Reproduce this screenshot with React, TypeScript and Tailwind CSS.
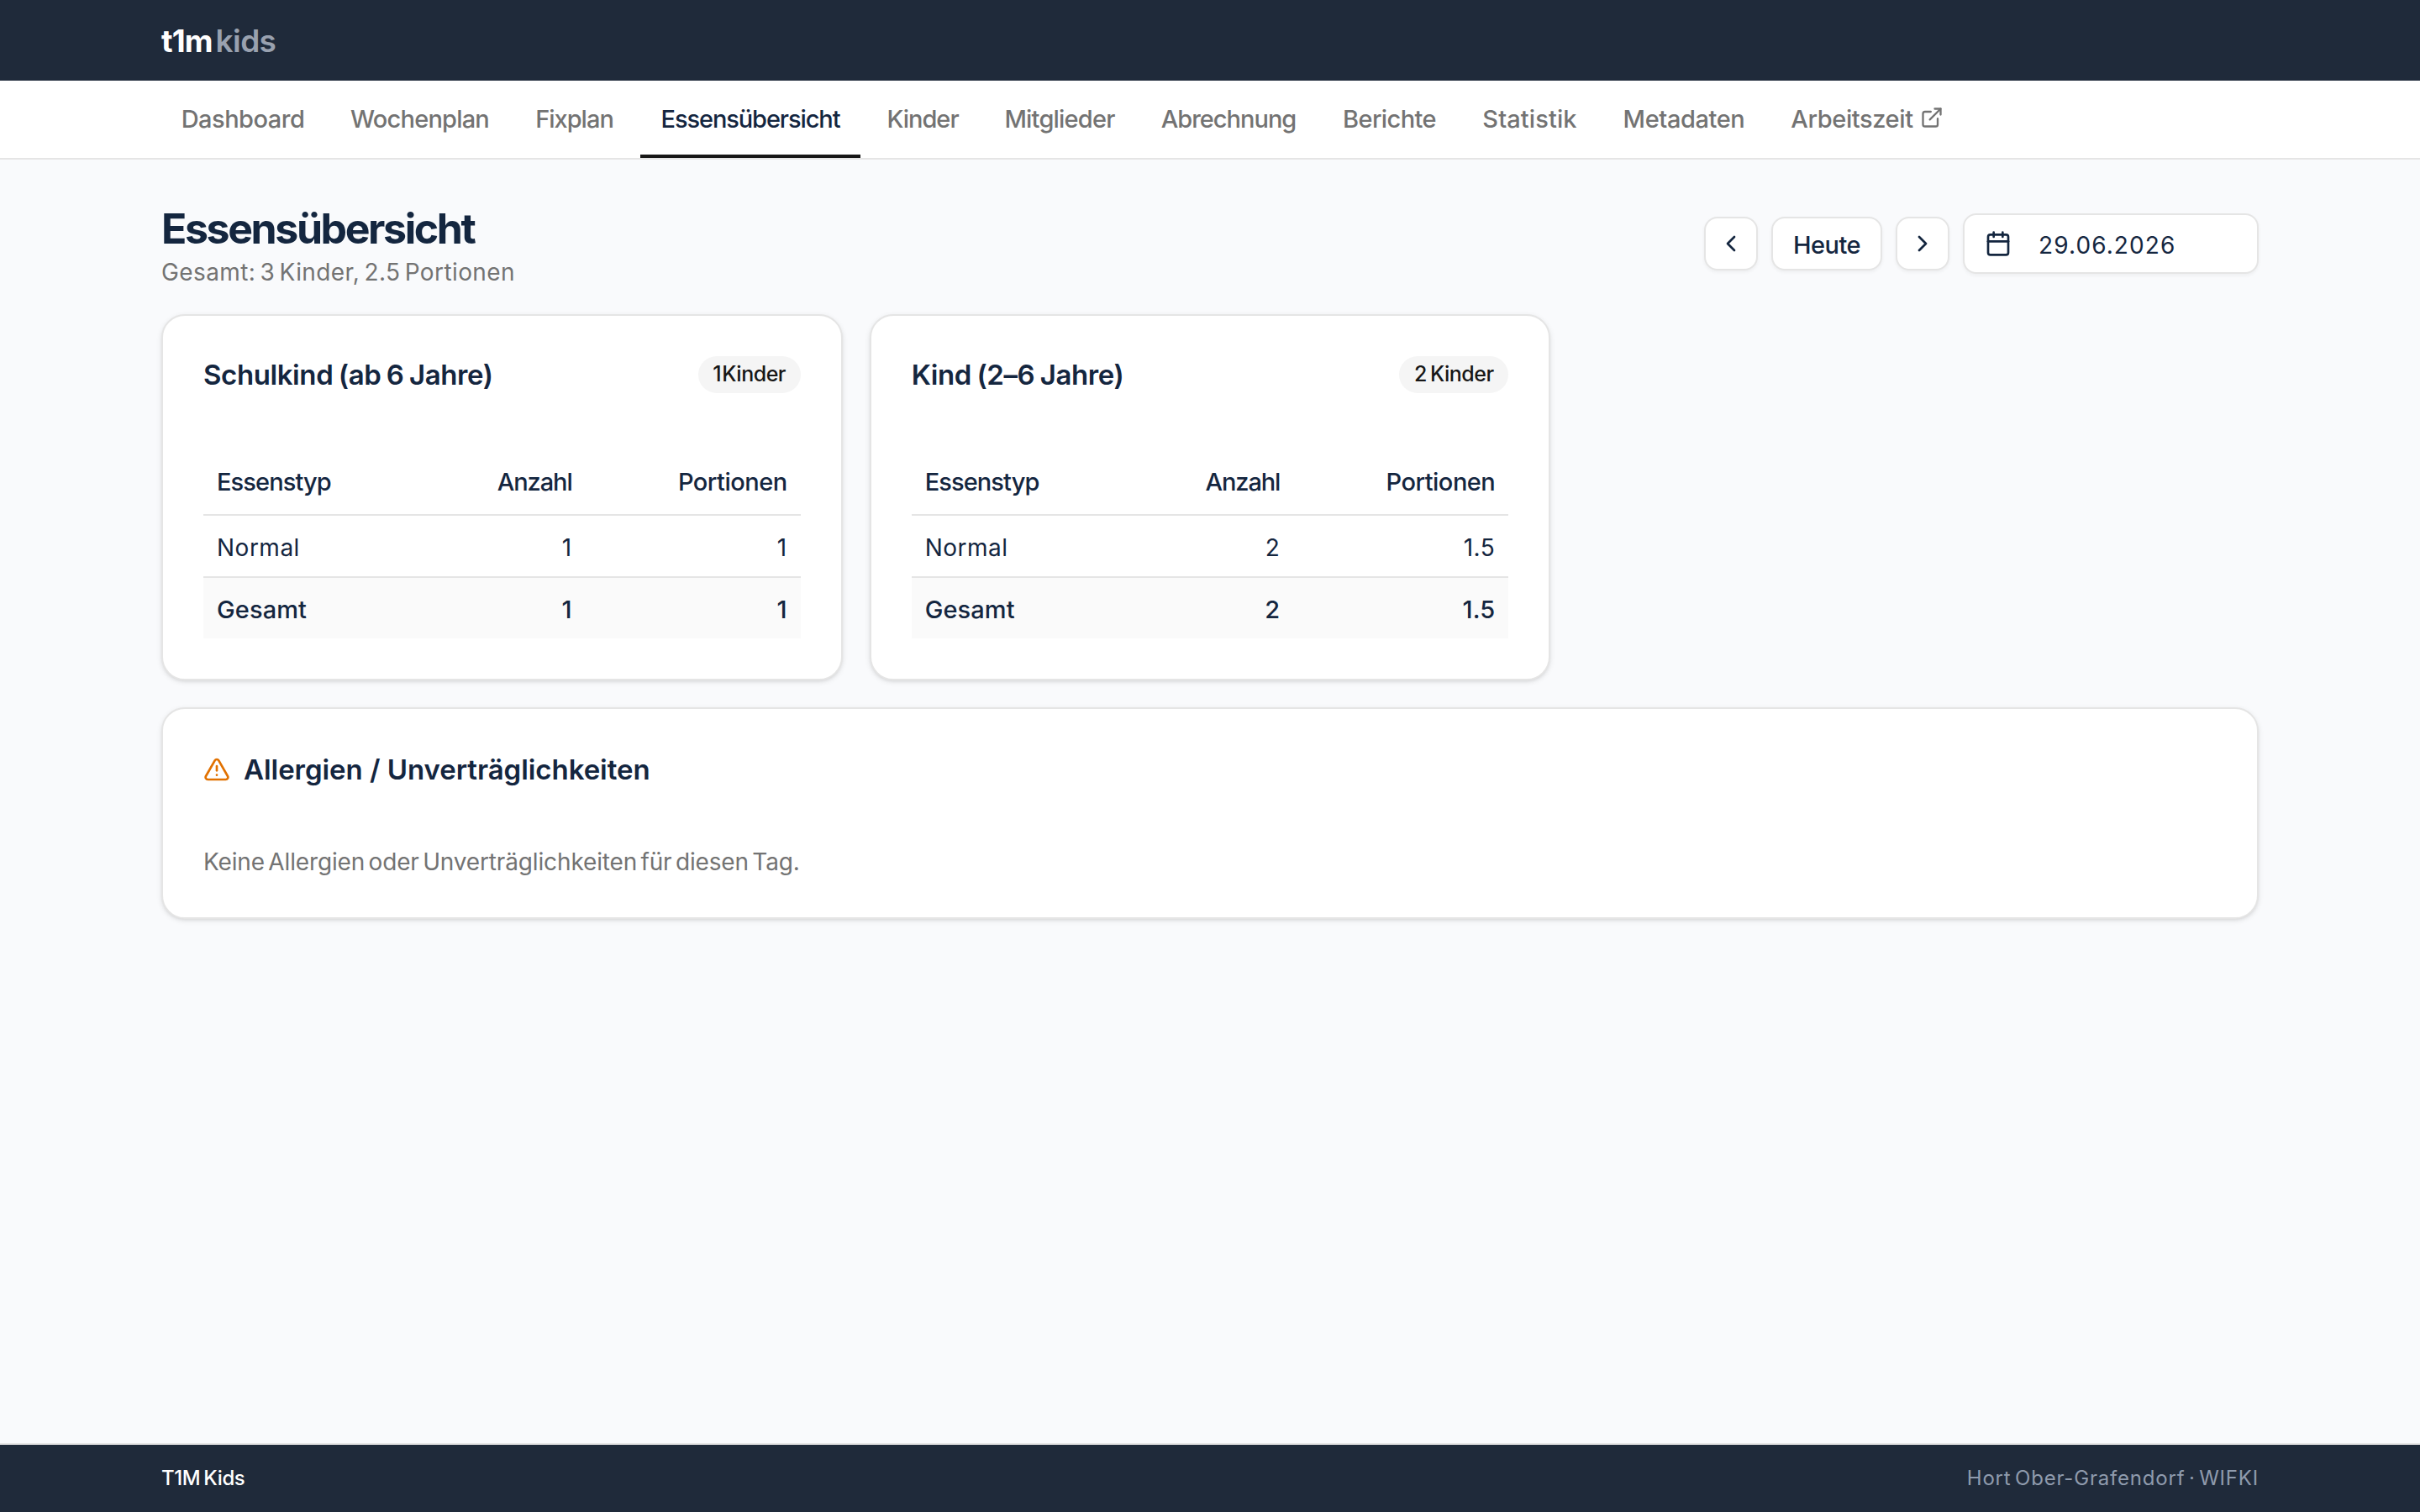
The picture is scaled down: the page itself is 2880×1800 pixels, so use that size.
import { Calendar, ChevronLeft, ChevronRight, ExternalLink, TriangleAlert } from "lucide-react";

type NavItem = { label: string; className: string; external?: boolean };

const navItems: NavItem[] = [
  { label: "Dashboard", className: "w-[194px] tracking-[-0.5px]" },
  { label: "Wochenplan", className: "w-[211px] tracking-[-0.8px]" },
  { label: "Fixplan", className: "w-[141px] tracking-[-1px]" },
  { label: "Essensübersicht", className: "w-[262px] tracking-[-1.1px]" },
  { label: "Kinder", className: "w-[132px] tracking-[-1px]" },
  { label: "Mitglieder", className: "w-[178px] tracking-[-0.8px]" },
  { label: "Abrechnung", className: "w-[208px] tracking-[-1px]" },
  { label: "Berichte", className: "w-[159px] tracking-[-0.6px]" },
  { label: "Statistik", className: "w-[159px] tracking-[0.1px]" },
  { label: "Metadaten", className: "w-[192px] tracking-[-0.4px]" },
  { label: "Arbeitszeit", className: "w-[228px] tracking-[-0.4px]", external: true },
];

type Group = {
  title: string;
  count: string;
  badgeClass: string;
  rows: { type: string; amount: string; portions: string }[];
  total: { amount: string; portions: string };
};

const groups: Group[] = [
  {
    title: "Schulkind (ab 6 Jahre)",
    count: "1 Kinder",
    badgeClass: "w-[122px] tracking-[-0.5px] [word-spacing:-5px]",
    rows: [{ type: "Normal", amount: "1", portions: "1" }],
    total: { amount: "1", portions: "1" },
  },
  {
    title: "Kind (2–6 Jahre)",
    count: "2 Kinder",
    badgeClass: "w-[130px] tracking-[-0.5px] [word-spacing:-2px]",
    rows: [{ type: "Normal", amount: "2", portions: "1.5" }],
    total: { amount: "2", portions: "1.5" },
  },
];

const cardClass =
  "rounded-[28px] border-2 border-neutral-200 bg-white p-12 shadow-[0_2px_6px_rgba(0,0,0,0.1),0_2px_4px_-2px_rgba(0,0,0,0.1)]";
const buttonClass =
  "flex h-16 items-center justify-center rounded-2xl border-2 border-neutral-200 bg-white shadow-[0_2px_4px_rgba(0,0,0,0.05)]";

function GroupCard({ group }: { group: Group }) {
  return (
    <section className={cardClass}>
      <div className="flex h-11 items-center justify-between">
        <h2 className="pt-0.5 text-[33px] font-semibold tracking-[-0.4px] [word-spacing:-1.5px]">{group.title}</h2>
        <span
          className={`flex h-11 items-center justify-center rounded-full bg-neutral-100 text-[25px] font-[450] text-neutral-900 ${group.badgeClass}`}
        >
          {group.count}
        </span>
      </div>
      <table className="mt-16 w-full table-fixed border-separate border-spacing-0 text-[28px]">
        <thead>
          <tr className="h-[82px] text-[29px]">
            <th className="border-b-2 border-neutral-200 px-4 pt-1 text-left font-[450] tracking-[-0.9px]">Essenstyp</th>
            <th className="w-[200px] border-b-2 border-neutral-200 px-4 pt-1 text-right font-[450] tracking-[-1.1px]">Anzahl</th>
            <th className="w-[256px] border-b-2 border-neutral-200 px-4 pt-1 text-right font-[450] tracking-[-0.5px]">Portionen</th>
          </tr>
        </thead>
        <tbody>
          {group.rows.map(row => (
            <tr key={row.type} className="h-[72px] tracking-[0.5px]">
              <td className="px-4 pt-1">{row.type}</td>
              <td className="px-4 pt-1 text-right">{row.amount}</td>
              <td className="px-4 pt-1 text-right">{row.portions}</td>
            </tr>
          ))}
        </tbody>
        <tfoot>
          <tr className="h-[74px] bg-neutral-50 text-[29px] font-[450] tracking-[0.1px]">
            <td className="border-t-2 border-neutral-200 px-4 pt-1">Gesamt</td>
            <td className="border-t-2 border-neutral-200 px-4 pt-1 text-right">{group.total.amount}</td>
            <td className="border-t-2 border-neutral-200 px-4 pt-1 text-right">{group.total.portions}</td>
          </tr>
        </tfoot>
      </table>
    </section>
  );
}

export default function App() {
  const active = "Essensübersicht";

  return (
    <div className="flex min-h-screen flex-col whitespace-nowrap bg-[#f9fafc] font-['Inter',sans-serif] text-[#14263f]">
      <header className="flex h-24 items-center gap-1 bg-[#1f2a3a] px-48 pt-0.5 text-[37px]">
        <span className="font-bold tracking-[-0.9px] text-white">t1m</span>
        <span className="font-semibold tracking-[-0.6px] text-[#99a1af]">kids</span>
      </header>

      <nav className="flex h-[94px] gap-2 border-b-2 border-neutral-200 bg-white px-48 text-[29px] font-[450]">
        {navItems.map(item => (
          <a
            key={item.label}
            className={`flex items-center justify-center gap-2 border-b-4 ${item.className} ${
              item.label === active ? "border-neutral-900" : "border-transparent text-neutral-500"
            }`}
          >
            <span className="pt-1">{item.label}</span>
            {item.external && <ExternalLink className="size-7" />}
          </a>
        ))}
      </nav>

      <main className="flex flex-1 flex-col gap-8 px-48 py-12">
        <div className="flex h-26 items-center justify-between">
          <div className="pt-1">
            <h1 className="text-[50px] leading-16 font-bold tracking-[-2.4px]">{active}</h1>
            <p className="text-[28px] leading-10 tracking-[0.4px] text-neutral-500 [word-spacing:-3px]">
              Gesamt: 3 Kinder, 2.5 Portionen
            </p>
          </div>
          <div className="flex items-center gap-4">
            <button className={`${buttonClass} w-16`}>
              <ChevronLeft className="size-8" />
            </button>
            <button className={`${buttonClass} w-[132px] pt-1 text-[29px] font-[450] tracking-[-0.5px]`}>Heute</button>
            <button className={`${buttonClass} w-16`}>
              <ChevronRight className="size-8" />
            </button>
            <button className="flex h-[72px] w-[352px] items-center gap-8 rounded-2xl border-2 border-neutral-200 bg-white px-6 text-[28px] tracking-[1.1px] shadow-[0_2px_4px_rgba(0,0,0,0.05)]">
              <Calendar className="size-8" />
              <span className="pt-1">29.06.2026</span>
            </button>
          </div>
        </div>

        <div className="grid grid-cols-3 gap-8">
          {groups.map(group => (
            <GroupCard key={group.title} group={group} />
          ))}
        </div>

        <section className={cardClass}>
          <h2 className="flex h-12 items-center gap-4 text-[33px] font-semibold tracking-[-0.05px]">
            <TriangleAlert className="size-8 text-[#e17100]" />
            <span className="pt-0.5">Allergien / Unverträglichkeiten</span>
          </h2>
          <p className="mt-16 h-10 pt-0.5 text-[28px] leading-10 tracking-[-0.15px] text-neutral-500 [word-spacing:-3.3px]">
            Keine Allergien oder Unverträglichkeiten für diesen Tag.
          </p>
        </section>
      </main>

      <footer className="flex h-[82px] items-center justify-between border-t-2 border-neutral-200 bg-[#1f2a3a] px-48 text-2xl">
        <span className="font-[450] tracking-[-0.4px] text-white [word-spacing:-2px]">T1M Kids</span>
        <span className="tracking-[0.8px] text-[#8f9bad] [word-spacing:-3px]">Hort Ober-Grafendorf · WIFKI</span>
      </footer>
    </div>
  );
}
